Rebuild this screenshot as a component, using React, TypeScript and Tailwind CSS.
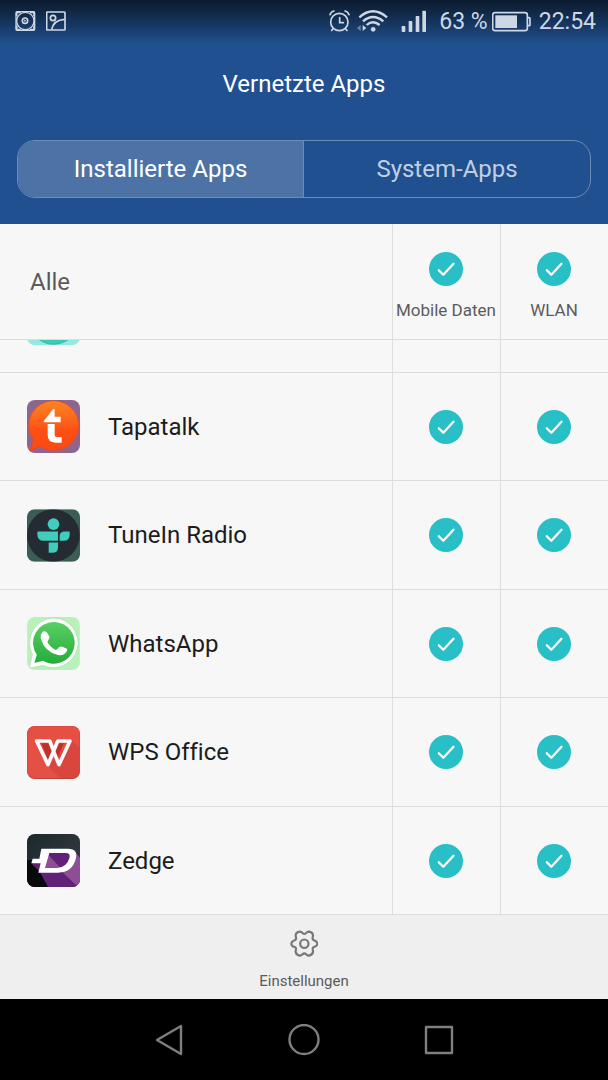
import { useState } from "react";
import type { ReactNode } from "react";

function Check({ label, size = "row" }: { label: ReactNode; size?: "row" | "head" }) {
  const [on, setOn] = useState(true);
  return (
    <label
      className={
        size === "head"
          ? "flex h-full flex-col items-center gap-3 pt-7 pr-px text-[17px] leading-6 font-normal text-[#5b5b5b]"
          : "flex items-center justify-center pr-px"
      }
    >
      <span className="grid size-[34px] shrink-0">
        <input
          type="checkbox"
          checked={on}
          onChange={() => setOn(!on)}
          aria-label={typeof label === "string" ? label : undefined}
          className="col-start-1 row-start-1 size-[34px] appearance-none rounded-full border-2 border-[#28bfc6] checked:bg-[#28bfc6]"
        />
        <svg viewBox="0 0 34 34" className="pointer-events-none col-start-1 row-start-1 size-[34px]" aria-hidden="true">
          <path d="M9.8 18.2l4.5 4.5 10.2-10.9" fill="none" stroke="#fff" strokeWidth="2.3" strokeLinecap="round" strokeLinejoin="round" />
        </svg>
      </span>
      {size === "head" && <span className="whitespace-nowrap">{label}</span>}
    </label>
  );
}

const iconClass = "size-[53px] shrink-0";

function Tapatalk() {
  return (
    <svg viewBox="0 0 159 159" className={iconClass} aria-hidden="true">
      <defs>
        <linearGradient id="tt" x1="0" y1="0" x2="0" y2="1">
          <stop offset="0" stopColor="#ff8420" />
          <stop offset=".45" stopColor="#fb5f1a" />
          <stop offset=".6" stopColor="#fd4f14" />
          <stop offset="1" stopColor="#f84a12" />
        </linearGradient>
      </defs>
      <rect width="159" height="159" rx="24" fill="#8f658f" />
      <path d="M79 2a76 75 0 1 1-42 137L13 153q-6 1-4-5l10-27A76 75 0 0 1 79 2Z" fill="url(#tt)" stroke="#d94a2a" strokeWidth="2" />
      <path d="M51 62 78 28q5-5 5 2v20h18v17H53q-5 0-2-5ZM62 72h21v33q0 6 6 6h15v17H86q-24 0-24-22Z" fill="#fff" />
    </svg>
  );
}

function TuneIn() {
  return (
    <svg viewBox="41 41 159 158" className={iconClass} aria-hidden="true">
      <defs>
        <clipPath id="ti"><rect x="41" y="41" width="159" height="158" rx="23" /></clipPath>
      </defs>
      <g clipPath="url(#ti)">
        <rect x="41" y="41" width="159" height="158" fill="#3a5d55" />
        <circle cx="120" cy="120" r="79" fill="#252b33" />
      </g>
      <g fill="#40cdbd">
        <circle cx="120.500" cy="86" r="17.500" />
        <path d="M76 108h58v28H91q-19 0-19-20v-4q0-4 4-4ZM169 108v10q0 18-18 18h-12v-13q0-15 15-15ZM106 141h28v14q0 17-17 17h-11Z" />
      </g>
    </svg>
  );
}

function WhatsApp() {
  return (
    <svg viewBox="41 39 159 160" className={iconClass} aria-hidden="true">
      <defs>
        <linearGradient id="wa" x1="0" y1="0" x2="0" y2="1">
          <stop offset="0" stopColor="#59cf63" />
          <stop offset="1" stopColor="#25ad3b" />
        </linearGradient>
      </defs>
      <rect x="41" y="39" width="159" height="160" rx="23" fill="#b9f1bb" />
      <path d="M122 42a75 75 0 1 1-34 143l-36 8q-5 0-4-5l9-36A75 75 0 0 1 122 42Z" fill="#fff" stroke="#a5dba8" strokeWidth="2" />
      <path d="M123 54a63 63 0 1 1-34 117l-26 7 7-25A63 63 0 0 1 123 54Z" fill="url(#wa)" />
      <path d="M87 84q7-5 13 1l8 12q3 6-4 13-3 4 0 8 9 13 20 19 5 3 9-2 6-9 14-6l13 5q4 3 1 8-9 16-27 12-40-9-52-50-2-12 5-20Z" fill="#fff" />
    </svg>
  );
}

function Wps() {
  return (
    <svg viewBox="41 41 159 159" className={iconClass} aria-hidden="true">
      <rect x="41" y="41" width="159" height="159" rx="23" fill="#b9443c" />
      <rect x="42" y="42" width="157" height="155" rx="22" fill="#e64f44" />
      <path d="m178 87 21 21v68q0 21-21 21h-37l-40-38Z" fill="#d8463d" />
      <path d="m84 93 21 52 16-32-9-20ZM116 113l12 34 24-54h-24Z" fill="#bd322c" />
      <g fill="none" stroke="#fafafa" strokeWidth="11" strokeLinejoin="round" strokeLinecap="round">
        <path d="M134 86h36l-33 71-15-37" />
        <path d="M132 89l-28 68-34-71h39l11 28" />
      </g>
    </svg>
  );
}

function Zedge() {
  return (
    <svg viewBox="41 40 159 159" className={iconClass} aria-hidden="true">
      <defs>
        <clipPath id="ze"><rect x="41" y="40" width="159" height="159" rx="23" /></clipPath>
        <linearGradient id="zg" x1="0" y1="0" x2="1" y2="1">
          <stop offset="0" stopColor="#1b292b" />
          <stop offset="1" stopColor="#3c3b46" />
        </linearGradient>
      </defs>
      <g clipPath="url(#ze)">
        <rect x="41" y="40" width="159" height="159" fill="url(#zg)" />
        <path d="M41 118h20l50 82H41Z" fill="#08090b" />
        <path d="M56 130 80 155 104 199h96V110l-16-15-64-8Z" fill="#612177" />
        <path d="m102 100 40 42-52 3ZM181 92l20 20v87h-6l-50-46q30-20 36-61Z" fill="#8d4e95" />
      </g>
      <path fillRule="evenodd" d="M84 84h80q32 0 23 32-11 40-53 40H75l7-28H54l4-14h20Zm24 13-13 45h37q29-3 36-29 5-16-12-16Z" fill="#fff" />
    </svg>
  );
}

function PreviousApp() {
  return (
    <svg viewBox="0 0 159 159" className={iconClass} aria-hidden="true">
      <rect width="159" height="159" rx="23" fill="#94e9e0" />
      <circle cx="80" cy="82" r="75" fill="#3dcbb5" stroke="#38aa9a" strokeWidth="2" />
    </svg>
  );
}

const apps = [
  { name: "Tapatalk", icon: <Tapatalk /> },
  { name: "TuneIn Radio", icon: <TuneIn /> },
  { name: "WhatsApp", icon: <WhatsApp /> },
  { name: "WPS Office", icon: <Wps /> },
  { name: "Zedge", icon: <Zedge /> },
];

function StatusBar() {
  return (
    <div className="flex h-11 items-center justify-between bg-linear-to-b from-[#0b1a2e] to-[#20508f] pr-3 pl-[15px] text-[23px] text-[#ced8e5]">
      <div className="flex items-center gap-[10px]">
        <svg viewBox="45 30 63 72" className="h-6 w-[21px]" fill="none" stroke="currentColor" aria-hidden="true">
          <rect x="48" y="35" width="56" height="56" rx="4" strokeWidth="4" />
          <circle cx="76" cy="63" r="26" strokeWidth="4" />
          <path d="M50 49V37h12M90 37h12v12M102 77v12H90M62 89H50V77" strokeWidth="5" />
          <circle cx="75" cy="62" r="8" strokeWidth="5" />
          <path d="m73 58 6 4-6 4Z" fill="currentColor" stroke="none" />
        </svg>
        <svg viewBox="138 30 60 72" className="h-6 w-5" fill="none" stroke="currentColor" strokeWidth="5" aria-hidden="true">
          <rect x="140" y="36" width="55" height="54" rx="2" />
          <circle cx="159" cy="54" r="8" />
          <path d="M155 89q5-29 39-31" />
        </svg>
      </div>
      <div className="flex items-center">
        <svg viewBox="27 30 63 72" className="mr-[6px] h-6 w-[21px]" fill="none" stroke="currentColor" strokeWidth="5" strokeLinecap="round" aria-hidden="true">
          <circle cx="58" cy="66" r="26" />
          <path d="M59 53v15h11M30 44q3-9 12-11M75 33q9 2 12 11M39 87l-4 4M77 87l4 4" />
        </svg>
        <svg viewBox="108 30 96 72" className="mr-[13px] h-6 w-8" fill="none" stroke="currentColor" strokeWidth="7" aria-hidden="true">
          <path d="M118 52q41-36 83 0M129 64q30-26 61 0M140 75q19-17 39 0" />
          <circle cx="159.500" cy="88" r="7" fill="currentColor" stroke="none" />
          <path d="m111 84 11-9v18Z" fill="#71839c" stroke="none" />
          <path d="m128 75 11 9-11 9Z" fill="currentColor" stroke="none" />
        </svg>
        <svg viewBox="243 30 78 72" className="mr-3 h-6 w-[26px]" fill="currentColor" aria-hidden="true">
          <rect x="245" y="78" width="11" height="18" rx="2" />
          <rect x="266" y="63" width="11" height="33" rx="2" />
          <rect x="287" y="48" width="11" height="48" rx="2" />
          <rect x="307" y="32" width="11" height="64" rx="2" />
        </svg>
        <span className="mr-1 whitespace-nowrap">63 %</span>
        <svg viewBox="516 30 117 72" className="mr-2 h-6 w-[39px]" fill="none" stroke="currentColor" aria-hidden="true">
          <rect x="518" y="38" width="104" height="54" rx="7" strokeWidth="5" />
          <rect x="526" y="46" width="65" height="38" fill="currentColor" stroke="none" />
          <path d="M623 53h4q3 0 3 3v18q0 3-3 3h-4" strokeWidth="5" />
        </svg>
        <span>22:54</span>
      </div>
    </div>
  );
}

export default function App() {
  const [tab, setTab] = useState(0);
  return (
    <div className="flex min-h-screen flex-col bg-[#f7f7f7] font-['Roboto',sans-serif] [font-variant-ligatures:none]">
      <header className="bg-[#20508f] pb-[26px]">
        <StatusBar />
        <h1 className="flex h-20 items-center justify-center text-2xl text-white">Vernetzte Apps</h1>
        <div role="tablist" className="mx-[17px] mt-4 grid h-[58px] grid-cols-2 overflow-hidden rounded-[18px] border border-[#6d8db8] text-2xl">
          {["Installierte Apps", "System-Apps"].map((name, i) => (
            <button
              key={name}
              type="button"
              role="tab"
              aria-selected={tab === i}
              onClick={() => setTab(i)}
              className={
                (tab === i ? "bg-[#4d73a6] text-white" : "text-[#c2cfe0]") +
                (i === 0 ? " border-r border-[#6d8db8]" : "")
              }
            >
              {name}
            </button>
          ))}
        </div>
      </header>

      <main>
        <table className="w-full table-fixed border-separate border-spacing-0 text-2xl text-[#1c1c1c] [&_td]:border-b [&_td]:border-[#dcdcdc] [&_td]:p-0 [&_th]:border-b [&_th]:border-[#dcdcdc] [&_th]:p-0">
          <colgroup>
            <col />
            <col className="w-[108px]" />
            <col className="w-[108px]" />
          </colgroup>
          <thead>
            <tr className="h-[116px]">
              <th scope="col" className="text-left font-normal text-[#5b5b5b]">
                <span className="pl-[30px]">Alle</span>
              </th>
              <th scope="col" className="border-l align-top"><Check size="head" label="Mobile Daten" /></th>
              <th scope="col" className="border-l align-top"><Check size="head" label="WLAN" /></th>
            </tr>
          </thead>
          <tbody>
            <tr>
              <td>
                <div className="flex h-8 flex-col justify-end overflow-hidden">
                  <div className="flex h-[108px] shrink-0 items-center pl-[27px]"><PreviousApp /></div>
                </div>
              </td>
              <td className="border-l" />
              <td className="border-l" />
            </tr>
          </tbody>
          <tbody>
            {apps.map((app) => (
              <tr key={app.name} className="odd:h-[108px] even:h-[109px]">
                <td>
                  <div className="flex items-center gap-7 pl-[27px]">
                    {app.icon}
                    <span>{app.name}</span>
                  </div>
                </td>
                <td className="border-l"><Check label={app.name + " Mobile Daten"} /></td>
                <td className="border-l"><Check label={app.name + " WLAN"} /></td>
              </tr>
            ))}
          </tbody>
        </table>
      </main>

      <footer className="flex flex-1 flex-col">
        <div className="flex flex-1 justify-center bg-[#efefef]">
          <button type="button" className="flex flex-col items-center gap-3 px-6 pt-[14px] pb-1.5 text-[15px] leading-6 text-[#5b5b5b]">
            <svg viewBox="150 72 84 84" className="size-7" fill="none" stroke="#77787b" strokeWidth="6.500" strokeLinejoin="round" aria-hidden="true">
              <circle cx="193" cy="116" r="12.500" />
              <path d="M193 87c5 0 6-7 13-7 7 1 13 5 13 11 0 5-3 9 0 13 3 4 12 2 13 12 0 10-10 8-13 12-3 4 1 9 0 13-1 6-7 10-13 11-7 0-8-7-13-7s-6 7-13 7c-6-1-12-5-13-11-1-4 3-9 0-13-3-4-13-2-13-12 1-10 10-8 13-12 3-4 0-8 0-13 0-6 6-10 13-11 7 0 8 7 13 7Z" />
            </svg>
            <span>Einstellungen</span>
          </button>
        </div>
        <nav className="flex h-[81px] items-center justify-center gap-[103px] bg-black">
          <button type="button" aria-label="Zurück">
            <svg viewBox="0 0 32 32" className="size-8" fill="none" stroke="#7d7f82" strokeWidth="2.400" strokeLinejoin="round"><path d="M4 16 28 2v28Z" /></svg>
          </button>
          <button type="button" aria-label="Startbildschirm">
            <svg viewBox="0 0 32 32" className="size-8" fill="none" stroke="#7d7f82" strokeWidth="2.400"><circle cx="16" cy="15.500" r="14.500" /></svg>
          </button>
          <button type="button" aria-label="Letzte Apps">
            <svg viewBox="0 0 32 32" className="size-8" fill="none" stroke="#7d7f82" strokeWidth="2.400" strokeLinejoin="round"><rect x="3" y="3" width="26" height="26" /></svg>
          </button>
        </nav>
      </footer>
    </div>
  );
}
